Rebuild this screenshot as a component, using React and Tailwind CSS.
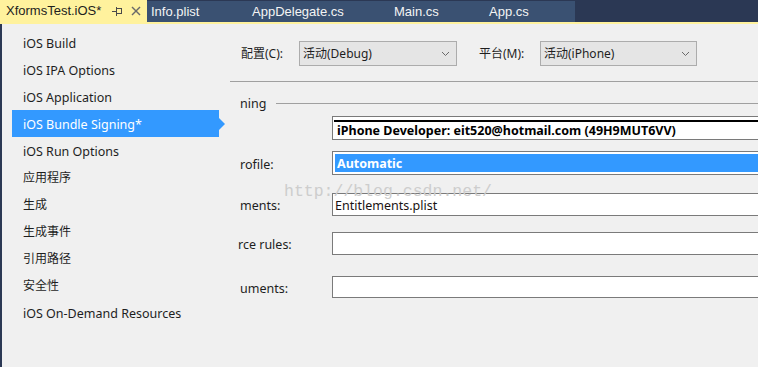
export default function App() {
  const nav = [
    "iOS Build",
    "iOS IPA Options",
    "iOS Application",
    "iOS Bundle Signing*",
    "iOS Run Options",
    "应用程序",
    "生成",
    "生成事件",
    "引用路径",
    "安全性",
    "iOS On-Demand Resources",
  ];
  const Chevron = () => (
    <svg width="9" height="6" viewBox="0 0 9 6" className="shrink-0">
      <polyline points="1,1 4.5,4.5 8,1" fill="none" stroke="#6a6a6a" strokeWidth="1" />
    </svg>
  );
  return (
    <div className="w-[758px] h-[367px] overflow-hidden bg-[#f0f0f0] flex flex-col relative font-['Noto_Sans','Noto_Sans_CJK_SC',sans-serif] text-[#1e1e1e]">
      {/* Tab bar */}
      <div className="h-[22px] flex bg-[#2b3854] text-[13px] text-white shrink-0 font-['Liberation_Sans','Noto_Sans_CJK_SC',sans-serif]">
        <div className="w-[147px] bg-[#fff29d] text-[#1e1e1e] flex items-center pl-[6px]">
          <span>XformsTest.iOS*</span>
          <svg width="11" height="10" viewBox="0 0 11 10" className="ml-[11px]">
            <line x1="0" y1="5.5" x2="4" y2="5.5" stroke="#4a4a4a" strokeWidth="1" />
            <line x1="4.5" y1="1" x2="4.5" y2="10" stroke="#4a4a4a" strokeWidth="1" />
            <rect x="4.5" y="2.5" width="5" height="5" fill="none" stroke="#4a4a4a" strokeWidth="1" />
          </svg>
          <svg width="10" height="10" viewBox="0 0 10 10" className="ml-[8px]">
            <line x1="1" y1="1" x2="9" y2="9" stroke="#6a6a6a" strokeWidth="1.4" />
            <line x1="9" y1="1" x2="1" y2="9" stroke="#6a6a6a" strokeWidth="1.4" />
          </svg>
        </div>
        <div className="w-[428px] bg-[#3a5172] flex items-center mt-px text-[#f4f4f4]">
          <span className="w-[101px] pl-[4px]">Info.plist</span>
          <span className="w-[142px] pl-[4px]">AppDelegate.cs</span>
          <span className="w-[95px] pl-[4px]">Main.cs</span>
          <span className="w-[90px] pl-[4px]">App.cs</span>
        </div>
      </div>
      <div className="h-[2px] bg-[#fff29d] shrink-0" />

      {/* Body */}
      <div className="flex-1 flex border-l-2 border-[#2b3854] text-[12.5px] leading-none">
        {/* Nav */}
        <div className="w-[228px] shrink-0 pt-[5px] flex flex-col">
          {nav.map((t, i) => {
            const sel = i === 3;
            const cjk = /[\u4e00-\u9fff]/.test(t);
            return (
              <div key={t} className="h-[27px] flex items-center">
                <div
                  className={
                    "ml-[10px] w-[207px] h-full pl-[11px] flex items-center " +
                    (sel ? "bg-[#3399ff] text-white " : "") +
                    (cjk ? "text-[12px]" : "pt-[4px]")
                  }
                >
                  {t}
                </div>
                {sel && (
                  <div className="w-0 h-0 border-y-[6px] border-y-transparent border-l-[6px] border-l-[#3399ff]" />
                )}
              </div>
            );
          })}
        </div>

        {/* Content */}
        <div className="flex-1 flex flex-col min-w-0">
          <div className="mt-[17px] h-[25px] flex items-center pl-[11px]">
            <span className="w-[58px] shrink-0 text-[12px]">配置(C):</span>
            <div className="w-[158px] shrink-0 h-full bg-[#e5e5e5] border border-[#acacac] flex items-center justify-between pl-[3px] pr-[6px] text-[12px]">
              <span>活动(Debug)</span>
              <Chevron />
            </div>
            <span className="ml-[22px] w-[61px] shrink-0 text-[12px]">平台(M):</span>
            <div className="w-[157px] shrink-0 h-full bg-[#e5e5e5] border border-[#acacac] flex items-center justify-between pl-[3px] pr-[6px] text-[12px]">
              <span>活动(iPhone)</span>
              <Chevron />
            </div>
          </div>

          <div className="mt-[15px] h-px bg-[#a0a0a0]" />

          <div className="mt-[14px] h-[14px] flex items-center pl-[10px]">
            <span className="pt-[2px]">ning</span>
            <div className="ml-[10px] flex-1 h-px bg-[#a0a0a0]" />
          </div>

          {/* Field 1 */}
          <div className="mt-[6px] h-[24px] flex">
            <div className="w-[102px] shrink-0" />
            <div className="flex-1 h-full bg-white border-y border-l border-[#7a7a7a] flex flex-col">
              <div className="mt-[3px] ml-px h-[2px] bg-black" />
              <div className="flex-1 flex items-center pl-[4px] pt-[2px] font-bold text-black whitespace-nowrap">
                iPhone Developer: eit520@hotmail.com (49H9MUT6VV)
              </div>
            </div>
          </div>

          {/* Field 2 */}
          <div className="mt-[11px] h-[24px] flex items-center">
            <div className="w-[102px] shrink-0 pl-[10px] pt-[4px]">rofile:</div>
            <div className="flex-1 h-full bg-white border-y border-l border-[#7a7a7a] p-[2px] pr-0">
              <div className="h-full bg-[#3399ff] text-white font-bold flex items-center pl-[2px] pt-[2px]">Automatic</div>
            </div>
          </div>

          {/* Field 3 */}
          <div className="mt-[18px] h-[23px] flex items-center">
            <div className="w-[102px] shrink-0 pl-[10px] pt-[4px]">ments:</div>
            <div className="flex-1 h-full bg-white border-y border-l border-[#7a7a7a] flex items-center pl-[2px] pt-[3px] text-[#1a1212]">
              Entitlements.plist
            </div>
          </div>

          {/* Field 4 */}
          <div className="mt-[16px] h-[23px] flex items-center">
            <div className="w-[102px] shrink-0 pl-[8px] pt-[4px]">rce rules:</div>
            <div className="flex-1 h-full bg-white border-y border-l border-[#7a7a7a]" />
          </div>

          {/* Field 5 */}
          <div className="mt-[21px] h-[22px] flex items-center">
            <div className="w-[102px] shrink-0 pl-[10px] pt-[4px]">uments:</div>
            <div className="flex-1 h-full bg-white border-y border-l border-[#7a7a7a]" />
          </div>
        </div>
      </div>

      {/* Watermark */}
      <div className="absolute left-[284px] top-[184px] text-[16.5px] leading-none text-[#cdcdcd] font-['Liberation_Mono',monospace] pointer-events-none">
        http://blog.csdn.net/
      </div>
    </div>
  );
}
